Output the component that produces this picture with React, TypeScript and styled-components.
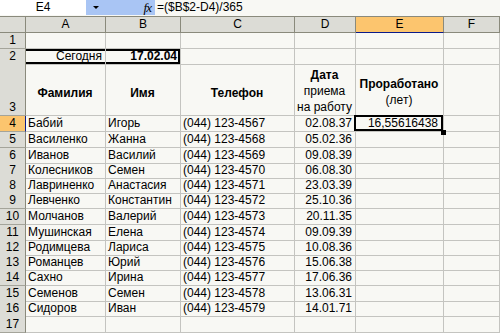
import React from "react";
import styled, { createGlobalStyle, css } from "styled-components";

const GlobalStyle = createGlobalStyle`
  html, body { margin: 0; padding: 0; background: #f8f8f4; }
  body { font-family: "Liberation Sans", Arial, sans-serif; font-size: 12px; color: #000; }
`;

const COLS = "26px 80px 75px 114px 61px 88px 1fr";
const CELL_BG = "#f8f8f4";
const HEAD_BG = "#dcdcd6";
const HEAD_LINE = "#8a8a7c";
const GRID = "#c4c4c0";
const ACTIVE = "#fcc56e";
const ACTIVE_LINE = "#0a1a8a";

const Sheet = styled.div`
  width: 500px;
  height: 333px;
  overflow: hidden;
  display: flex;
  flex-direction: column;
  background: ${CELL_BG};
`;

const FormulaBar = styled.div`
  display: flex;
  height: 15px;
  margin-bottom: 1px;
  flex: none;
`;

const NameBox = styled.div`
  width: 86px;
  background: #ffffff;
  display: flex;
  align-items: center;
  justify-content: center;
  line-height: 15px;
`;

const FxZone = styled.div`
  width: 69px;
  background: #a9c5f4;
  display: flex;
  align-items: center;
  justify-content: space-between;
  padding: 0 4px 0 7px;
  box-sizing: border-box;
`;

const Arrow = styled.div`
  width: 0;
  height: 0;
  border-left: 3px solid transparent;
  border-right: 3px solid transparent;
  border-top: 3px solid #000;
`;

const Fx = styled.span`
  font-family: "Liberation Serif", "Times New Roman", serif;
  font-style: italic;
  font-size: 13px;
  line-height: 15px;
  letter-spacing: -1px;
`;

const FormulaText = styled.div`
  flex: 1;
  padding-left: 2px;
  line-height: 15px;
  background: ${CELL_BG};
`;

const HeaderRow = styled.div`
  display: grid;
  grid-template-columns: ${COLS};
  height: 17px;
  flex: none;
  box-sizing: border-box;
  border-top: 1px solid ${HEAD_LINE};
`;

const ColHead = styled.div<{ $active?: boolean }>`
  background: ${(p) => (p.$active ? ACTIVE : HEAD_BG)};
  border-right: 1px solid ${HEAD_LINE};
  border-bottom: 1px solid ${(p) => (p.$active ? ACTIVE_LINE : HEAD_LINE)};
  display: flex;
  align-items: center;
  justify-content: center;
  line-height: 15px;
`;

const Row = styled.div<{ $h: number }>`
  display: grid;
  grid-template-columns: ${COLS};
  height: ${(p) => p.$h}px;
  flex: none;
`;

const LastRow = styled(Row)`
  flex: 1;
`;

const RowHead = styled.div<{ $active?: boolean; $bottom?: boolean }>`
  background: ${(p) => (p.$active ? ACTIVE : HEAD_BG)};
  border-right: 1px solid ${(p) => (p.$active ? ACTIVE_LINE : HEAD_LINE)};
  border-bottom: 1px solid #a4a49a;
  box-sizing: border-box;
  display: flex;
  justify-content: center;
  align-items: ${(p) => (p.$bottom ? "flex-end" : "center")};
  line-height: 15px;
`;

const Cell = styled.div<{
  $align?: "left" | "right" | "center";
  $bold?: boolean;
  $boxTop?: boolean;
  $boxBottom?: boolean;
  $boxRight?: boolean;
  $selected?: boolean;
}>`
  position: relative;
  box-sizing: border-box;
  border-right: 1px solid ${GRID};
  border-bottom: 1px solid ${GRID};
  display: flex;
  align-items: center;
  justify-content: ${(p) =>
    p.$align === "right" ? "flex-end" : p.$align === "center" ? "center" : "flex-start"};
  padding: 0 3px 0 2px;
  font-weight: ${(p) => (p.$bold ? "bold" : "normal")};
  white-space: nowrap;
  overflow: visible;
  line-height: 15px;
  box-shadow: ${(p) =>
    [
      p.$boxTop ? "inset 0 2px 0 #000" : null,
      p.$boxBottom ? "inset 0 -2px 0 #000" : null,
      p.$boxRight ? "inset -2px 0 0 #000" : null,
    ]
      .filter(Boolean)
      .join(", ") || "none"};
  ${(p) =>
    p.$selected &&
    css`
      padding-right: 5px;
      &::after {
        content: "";
        position: absolute;
        left: -2px;
        top: -1px;
        right: 0;
        bottom: 0;
        border: 2px solid #000;
      }
      &::before {
        content: "";
        position: absolute;
        right: -3px;
        bottom: -4px;
        width: 5px;
        height: 5px;
        background: #000;
        z-index: 2;
      }
    `}
`;

const TitleCell = styled(Cell)<{ $drop?: number }>`
  flex-direction: column;
  justify-content: center;
  align-items: center;
  text-align: center;
  line-height: 16px;
  padding-top: ${(p) => p.$drop ?? 2}px;
`;

const Strong = styled.span`
  font-weight: bold;
`;

type Person = { last: string; first: string; phone: string; date: string; h: number };

const people: Person[] = [
  { last: "Бабий", first: "Игорь", phone: "(044) 123-4567", date: "02.08.37", h: 16 },
  { last: "Василенко", first: "Жанна", phone: "(044) 123-4568", date: "05.02.36", h: 16 },
  { last: "Иванов", first: "Василий", phone: "(044) 123-4569", date: "09.08.39", h: 15 },
  { last: "Колесников", first: "Семен", phone: "(044) 123-4570", date: "06.08.30", h: 15 },
  { last: "Лавриненко", first: "Анастасия", phone: "(044) 123-4571", date: "23.03.39", h: 15 },
  { last: "Левченко", first: "Константин", phone: "(044) 123-4572", date: "25.10.36", h: 16 },
  { last: "Молчанов", first: "Валерий", phone: "(044) 123-4573", date: "20.11.35", h: 16 },
  { last: "Мушинская", first: "Елена", phone: "(044) 123-4574", date: "09.09.39", h: 15 },
  { last: "Родимцева", first: "Лариса", phone: "(044) 123-4575", date: "10.08.36", h: 15 },
  { last: "Романцев", first: "Юрий", phone: "(044) 123-4576", date: "15.06.38", h: 15 },
  { last: "Сахно", first: "Ирина", phone: "(044) 123-4577", date: "17.06.36", h: 16 },
  { last: "Семенов", first: "Семен", phone: "(044) 123-4578", date: "13.06.31", h: 15 },
  { last: "Сидоров", first: "Иван", phone: "(044) 123-4579", date: "14.01.71", h: 15 },
];

const columns = ["A", "B", "C", "D", "E", "F"];

export default function App() {
  return (
    <>
      <GlobalStyle />
      <Sheet>
        <FormulaBar>
          <NameBox>E4</NameBox>
          <FxZone>
            <Arrow />
            <Fx>fx</Fx>
          </FxZone>
          <FormulaText>=($B$2-D4)/365</FormulaText>
        </FormulaBar>

        <HeaderRow>
          <ColHead />
          {columns.map((c) => (
            <ColHead key={c} $active={c === "E"}>
              {c}
            </ColHead>
          ))}
        </HeaderRow>

        <Row $h={16}>
          <RowHead>1</RowHead>
          <Cell />
          <Cell />
          <Cell />
          <Cell />
          <Cell />
          <Cell />
        </Row>

        <Row $h={15}>
          <RowHead>2</RowHead>
          <Cell $align="right" $boxTop $boxBottom>
            Сегодня
          </Cell>
          <Cell $align="right" $bold $boxTop $boxBottom $boxRight>
            17.02.04
          </Cell>
          <Cell />
          <Cell />
          <Cell />
          <Cell />
        </Row>

        <Row $h={52}>
          <RowHead $bottom>3</RowHead>
          <TitleCell $drop={7}>
            <Strong>Фамилия</Strong>
          </TitleCell>
          <TitleCell $drop={7}>
            <Strong>Имя</Strong>
          </TitleCell>
          <TitleCell $drop={7}>
            <Strong>Телефон</Strong>
          </TitleCell>
          <TitleCell>
            <Strong>Дата</Strong>
            <span>приема</span>
            <span>на работу</span>
          </TitleCell>
          <TitleCell $drop={4}>
            <Strong>Проработано</Strong>
            <span>(лет)</span>
          </TitleCell>
          <Cell />
        </Row>

        {people.map((p, i) => (
          <Row key={p.last} $h={p.h}>
            <RowHead $active={i === 0}>{i + 4}</RowHead>
            <Cell>{p.last}</Cell>
            <Cell>{p.first}</Cell>
            <Cell>{p.phone}</Cell>
            <Cell $align="right">{p.date}</Cell>
            {i === 0 ? (
              <Cell $align="right" $selected>
                16,55616438
              </Cell>
            ) : (
              <Cell />
            )}
            <Cell />
          </Row>
        ))}

        <LastRow $h={18}>
          <RowHead>17</RowHead>
          <Cell />
          <Cell />
          <Cell />
          <Cell />
          <Cell />
          <Cell />
        </LastRow>
      </Sheet>
    </>
  );
}
